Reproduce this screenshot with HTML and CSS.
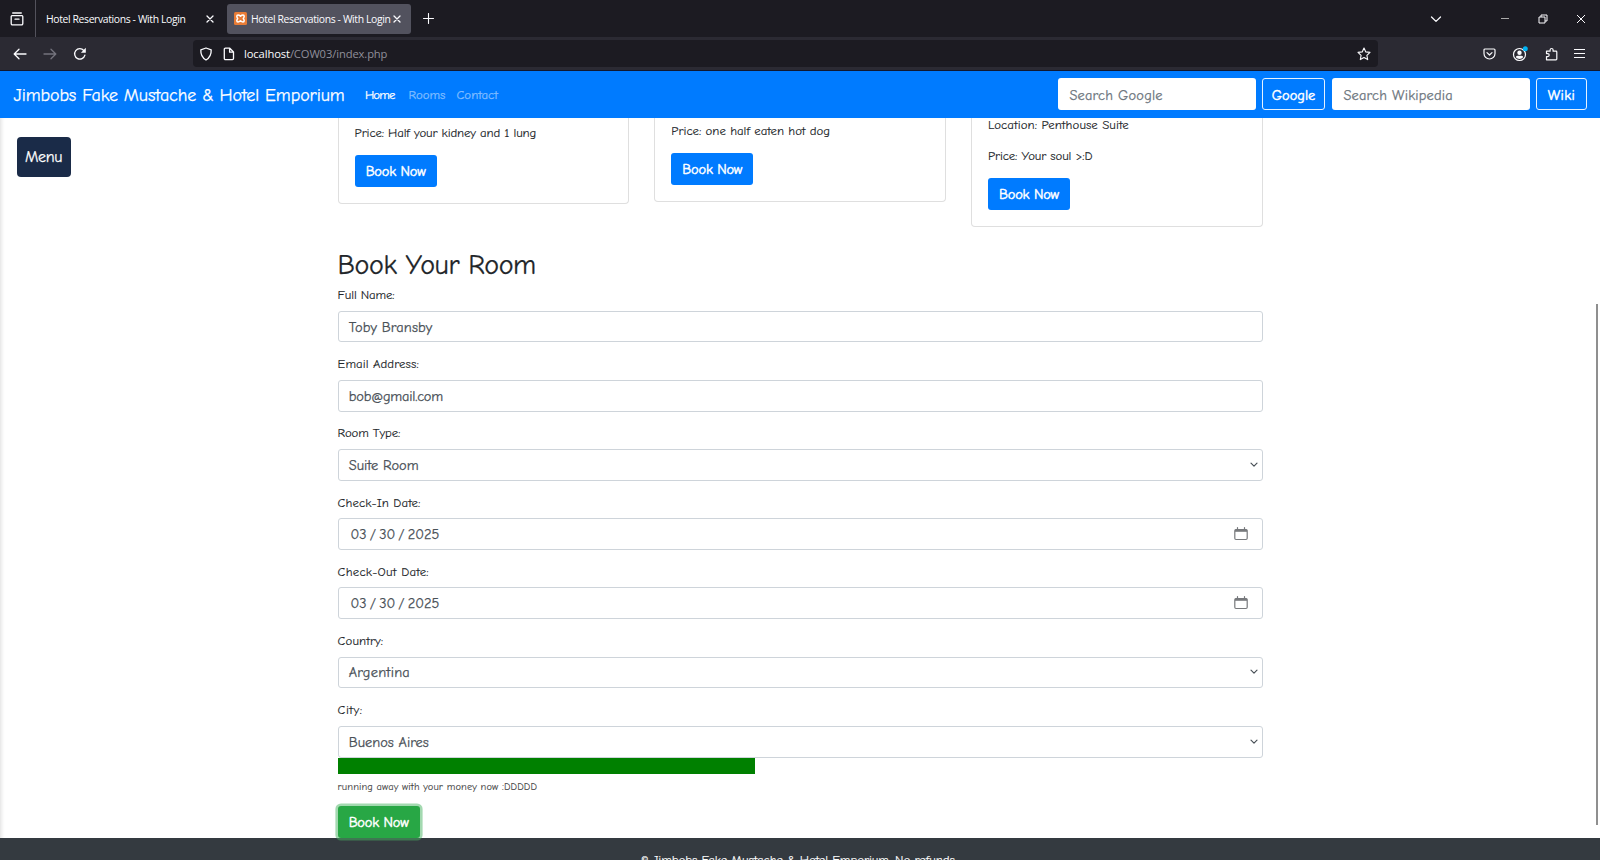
FILE: index.html
```html
<!DOCTYPE html>
<html lang="en">
<head>
<meta charset="utf-8">
<title>Hotel Reservations - With Login</title>
<link rel="stylesheet" href="styles.css">
</head>
<body>
<div class="window">
  <header class="tabbar">
    <div class="tabview">
      <svg width="14" height="14" viewBox="0 0 14 14"><path d="M2.7 1h8.6M1.8 3.6h10.4M2.2 3.6h9.6a1 1 0 0 1 1 1v7a1.2 1.2 0 0 1-1.2 1.2H2.4a1.2 1.2 0 0 1-1.2-1.2v-7a1 1 0 0 1 1-1zM5 7.2h4"/></svg>
    </div>
    <div class="tab tab-first"><span class="tab-title">Hotel Reservations - With Login</span>
      <svg class="tab-close" width="8" height="8" viewBox="0 0 8 8"><path d="M1 1l6 6M7 1L1 7"/></svg></div>
    <div class="tab tab-active">
      <svg class="favicon" width="13" height="13" viewBox="0 0 13 13"><rect class="fav-bg" width="13" height="13" rx="1.5"/><path class="fav-mark" d="M2.800 4.200Q2.800 3 4 3q1.200 0 2.500 1.200Q7.800 3 9 3q1.200 0 1.200 1.200 0 1.100-.9 2.300.9 1.200.9 2.300Q10.200 10 9 10 7.800 10 6.500 8.800 5.200 10 4 10 2.800 10 2.800 8.800q0-1.100.9-2.300-.9-1.200-.9-2.300z"/></svg>
      <span class="tab-title">Hotel Reservations - With Login</span>
      <svg class="tab-close" width="8" height="8" viewBox="0 0 8 8"><path d="M1 1l6 6M7 1L1 7"/></svg></div>
    <svg class="newtab" width="11" height="11" viewBox="0 0 11 11"><path d="M5.5 .5v10M.5 5.5h10"/></svg>
    <div class="winctl">
      <svg width="12" height="12" viewBox="0 0 12 12"><path d="M1.5 4l4.500 4.400L10.500 4"/></svg>
      <svg class="thin c-min" width="10" height="10" viewBox="0 0 10 10"><path d="M1 4.500h8"/></svg>
      <svg class="thin c-max" width="10" height="10" viewBox="0 0 10 10"><path d="M1 3h6v6H1zM3 3V1h6v6H7"/></svg>
      <svg class="thin c-close" width="10" height="10" viewBox="0 0 10 10"><path d="M1 1l8 8M9 1L1 9"/></svg>
    </div>
  </header>
  <div class="toolbar">
    <div class="history">
      <svg width="14" height="12" viewBox="0 0 14 12"><path d="M13 6H1.500M6 1.200L1.200 6 6 10.800"/></svg>
      <svg class="dim" width="14" height="12" viewBox="0 0 14 12"><path d="M1 6h11.500M8 1.200L12.800 6 8 10.800"/></svg>
      <svg width="14" height="14" viewBox="0 0 14 14"><path d="M11.900 8.200A5.200 5.200 0 1 1 10.800 3.500"/><path class="solid" d="M12.800.8v4.900H7.900z"/></svg>
    </div>
    <div class="urlbar">
      <svg width="14" height="14" viewBox="0 0 14 14"><path d="M7 1l5.200 1.800c.2 4.600-1.300 8-5.200 10.200C3.100 10.800 1.600 7.400 1.800 2.800z"/></svg>
      <svg class="page-icon" width="12" height="14" viewBox="0 0 12 14"><path d="M2.400 1.200h4.400L10.500 5v6.600a1.100 1.100 0 0 1-1.100 1.100h-7a1.100 1.100 0 0 1-1.100-1.100V2.300a1.100 1.100 0 0 1 1.100-1.100zM6.600 1.400v3.800h3.700"/></svg>
      <span class="url"><b>localhost</b>/COW03/index.php</span>
      <svg class="star" width="14" height="14" viewBox="0 0 14 14"><path d="M7 1l1.800 3.900 4.200.5-3.100 2.900.8 4.300L7 10.500l-3.700 2.100.8-4.300L1 5.400l4.200-.5z"/></svg>
    </div>
    <div class="tools">
      <svg width="13" height="12" viewBox="0 0 13 12"><path d="M2 1h9a1 1 0 0 1 1 1v3.500a5.500 5.500 0 0 1-11 0V2a1 1 0 0 1 1-1zM4 4.600L6.500 7 9 4.600"/></svg>
      <svg width="16" height="16" viewBox="0 0 16 16"><circle cx="7.500" cy="8.500" r="6"/><circle class="solid" cx="7.500" cy="6.800" r="2.200"/><path class="solid" d="M3.800 11.200q.3-1.400 2-1.400h3.400q1.700 0 2 1.400-1.500 1.800-3.700 1.800t-3.700-1.800z"/><circle class="dot" cx="13.300" cy="2.700" r="2.500"/></svg>
      <svg width="13" height="14" viewBox="0 0 13 14"><path d="M1.500 12.800V9.600h1.200a1.500 1.500 0 0 0 0-3H1.500V4.200h3.600V3a1.500 1.500 0 0 1 3 0v1.200H11a.8.800 0 0 1 .8.800v7a.8.800 0 0 1-.8.800z"/></svg>
      <svg width="11" height="11" viewBox="0 0 11 11"><path d="M.5 1.500h10M.5 5.500h10M.5 9.500h10"/></svg>
    </div>
  </div>

  <nav class="navbar">
    <a class="brand">Jimbobs Fake Mustache &amp; Hotel Emporium</a>
    <a class="link link-on">Home</a><a class="link link-rooms">Rooms</a><a class="link">Contact</a>
    <div class="searches">
      <div class="search">Search Google</div>
      <div class="outline-btn btn-google">Google</div>
      <div class="search">Search Wikipedia</div>
      <div class="outline-btn btn-wiki">Wiki</div>
    </div>
  </nav>

  <div class="viewport">
    <div class="menu">Menu</div>
    <main class="container">
      <div class="cards">
        <div class="card card-a"><p class="snug">Price: Half your kidney and 1 lung</p><div class="btn">Book Now</div></div>
        <div class="card card-b"><p>Price: one half eaten hot dog</p><div class="btn">Book Now</div></div>
        <div class="card card-c"><p class="loose">Location: Penthouse Suite</p><p class="snug">Price: Your soul &gt;:D</p><div class="btn">Book Now</div></div>
      </div>
      <h2>Book Your Room</h2>
      <div class="group"><label class="snug">Full Name:</label><div class="field"><span class="loose">Toby Bransby</span></div></div>
      <div class="group"><label class="loose">Email Address:</label><div class="field"><span class="email">bob@gmail.com</span></div></div>
      <div class="group"><label class="snug">Room Type:</label><div class="field"><span>Suite Room</span><svg class="chev" width="8" height="6" viewBox="0 0 8 6"><path d="M1 1.200l3 3 3-3"/></svg></div></div>
      <div class="group"><label class="loose">Check-In Date:</label><div class="field date"><span class="day">03 / 30 / 2025</span><svg class="cal" width="14" height="14" viewBox="0 0 14 14"><path d="M2 2.500h10a1.200 1.200 0 0 1 1.200 1.200v7.600a1.200 1.200 0 0 1-1.200 1.200H2A1.200 1.200 0 0 1 .8 11.300V3.700A1.200 1.200 0 0 1 2 2.500zM3.500 .6v2M10.500 .6v2"/><path class="cal-top" d="M1 2.500h12v2.300H1z"/></svg></div></div>
      <div class="group"><label class="looser">Check-Out Date:</label><div class="field date"><span class="day">03 / 30 / 2025</span><svg class="cal" width="14" height="14" viewBox="0 0 14 14"><path d="M2 2.500h10a1.200 1.200 0 0 1 1.200 1.200v7.600a1.200 1.200 0 0 1-1.200 1.200H2A1.200 1.200 0 0 1 .8 11.300V3.700A1.200 1.200 0 0 1 2 2.500zM3.500 .6v2M10.500 .6v2"/><path class="cal-top" d="M1 2.500h12v2.300H1z"/></svg></div></div>
      <div class="group"><label class="loose">Country:</label><div class="field"><span class="looser">Argentina</span><svg class="chev" width="8" height="6" viewBox="0 0 8 6"><path d="M1 1.200l3 3 3-3"/></svg></div></div>
      <div class="group last"><label class="city">City:</label><div class="field"><span>Buenos Aires</span><svg class="chev" width="8" height="6" viewBox="0 0 8 6"><path d="M1 1.200l3 3 3-3"/></svg></div></div>
      <div class="progress"></div>
      <div class="status">running away with your money now :DDDDD</div>
      <div class="btn btn-submit">Book Now</div>
    </main>
    <footer class="footer">© Jimbobs Fake Mustache &amp; Hotel Emporium. No refunds.</footer>
    <div class="scroll-thumb"></div>
  </div>
</div>
</body>
</html>
```

FILE: styles.css
```css
* { box-sizing: border-box; }
body { margin: 0; background: #fff; overflow: hidden; }
.window {
  width: 1600px; height: 860px; overflow: hidden;
  display: flex; flex-direction: column;
  font-family: "Comic Sans MS", "Comic Neue", "Noto Sans", sans-serif;
  font-size: 12.8px; color: #212529; white-space: nowrap;
}
svg { display: block; flex: none; fill: none; stroke: #fbfbfe; stroke-width: 1.3; stroke-linecap: round; stroke-linejoin: round; }
.solid { fill: #fbfbfe; stroke: none; }

/* browser chrome */
.tabbar { height: 37px; flex: none; background: #1c1b22; display: flex; align-items: center; font-family: "Open Sans", "Noto Sans", sans-serif; font-size: 10.4px; color: #fbfbfe; }
.tabview { width: 36px; height: 37px; border-right: 1px solid #53525c; display: flex; align-items: center; padding-left: 10px; }
.tab { height: 30px; display: flex; align-items: center; border-radius: 3px; }
.tab-first { width: 191px; padding-left: 10px; }
.tab-title { width: 140px; letter-spacing: -0.37px; }
.tab-first .tab-close { margin-left: 20px; }
.tab-active { width: 184px; background: #52525e; padding-left: 7px; }
.favicon { margin-right: 4px; }
.fav-bg { fill: #e87c36; stroke: none; }
.fav-mark { stroke: #fff; stroke-width: 1.5; }
.tab-active .tab-close { margin-left: 2px; }
.newtab { margin-left: 12px; stroke-width: 1.1; }
.winctl { margin-left: auto; display: flex; align-items: center; padding-right: 14.5px; }
.thin { stroke-width: 1; stroke-linecap: butt; }
.c-min { margin-left: 58px; stroke: #aaa; }
.c-max { margin-left: 28px; }
.c-close { margin-left: 28px; }
.toolbar { height: 34px; flex: none; background: #2b2a33; border-bottom: 1px solid #11182f; display: flex; align-items: center; }
.history { width: 193px; display: flex; align-items: center; gap: 16px; padding-left: 13px; }
.dim { stroke: #74737d; }
.urlbar { width: 1185px; height: 27px; background: #1c1b22; border-radius: 4px; display: flex; align-items: center; padding-left: 6px; font-family: "Open Sans", "Noto Sans", sans-serif; font-size: 11.2px; color: #8f8f9a; }
.page-icon { margin: 0 9px 0 10px; }
.url { letter-spacing: -0.11px; }
.url b { font-weight: 400; color: #fbfbfe; }
.star { margin: 0 7px 0 auto; stroke-width: 1.1; }
.tools { flex: 1; display: flex; align-items: center; justify-content: space-between; padding: 0 15px 0 105px; }
.tools svg { stroke-width: 1.2; }
.dot { fill: #00b3f4; stroke: none; }

/* site navigation */
.navbar, .viewport { -webkit-text-stroke: 0.25px currentColor; }
.navbar { height: 46.5px; flex: none; background: #007bff; color: #fff; display: flex; align-items: center; padding: 0 13px 0 13.5px; }
.brand { width: 351.5px; font-size: 18px; letter-spacing: -0.08px; padding-top: 2px; }
.link { font-size: 12.8px; color: #80bdff; padding-top: 1px; }
.link-on { color: #fff; width: 43.5px; letter-spacing: -0.9px; }
.link-rooms { width: 48px; }
.searches { margin-left: auto; display: flex; gap: 6.5px; font-size: 14.4px; }
.search { width: 198px; height: 32px; background: #fff; border-radius: 3px; color: #6c757d; line-height: 35px; padding-left: 12px; letter-spacing: 0.18px; }
.outline-btn { height: 32px; border: 1px solid #e6f2ff; border-radius: 3px; line-height: 33px; text-align: center; -webkit-text-stroke-width: 0.45px; }
.btn-google { width: 63px; }
.btn-wiki { width: 51px; letter-spacing: 0.4px; }

/* page body */
.viewport { flex: 1; min-height: 0; overflow: hidden; position: relative; box-shadow: inset 4px 0 4px -3px rgba(0,0,0,.14); }
.menu { position: absolute; left: 16.5px; top: 19.5px; width: 54px; height: 39.5px; border-radius: 4px; background: #1a2b48; color: #fff; font-size: 16px; line-height: 41px; text-align: center; letter-spacing: -0.4px; }
.container { width: 925px; margin-left: 337.6px; }
.cards { height: 110px; display: grid; grid-template-columns: repeat(3, 291.6px); column-gap: 25.1px; align-items: start; }
.card { border: 1px solid #dfdfdf; border-top: 0; border-radius: 0 0 4px 4px; padding: 0 16px 16px; }
.card-a { padding-top: 6px; }
.card-b { padding-top: 4px; }
.card-c { margin-top: -1.9px; }
p { margin: 0 0 12.5px; line-height: 18.8px; }
.snug { letter-spacing: -0.12px; }
.loose { letter-spacing: 0.08px; }
.looser { letter-spacing: 0.22px; }
.city { letter-spacing: 0.5px; }
.btn { width: 82px; height: 32px; border-radius: 3px; background: #007bff; color: #fff; font-size: 14.4px; line-height: 34.5px; text-align: center; letter-spacing: -0.2px; -webkit-text-stroke-width: 0.45px; }
h2 { margin: 20px 0 4.5px; font-size: 28px; font-weight: 400; line-height: 34px; letter-spacing: -0.38px; }
.group { height: 69.2px; }
.group label { display: block; line-height: 18.5px; margin-bottom: 6.2px; }
p, .group label { -webkit-text-stroke-width: 0.12px; }
.field { height: 31.7px; border: 1px solid #ced4da; border-radius: 3px; color: #495057; font-size: 14.4px; display: flex; align-items: center; justify-content: space-between; padding: 0 4px 0 10.2px; }
.field span { padding-top: 1px; }
.email { letter-spacing: -0.22px; }
.date { padding: 0 14px 0 12px; }
.day { word-spacing: -1.7px; }
.last { height: 56.4px; }
.chev { stroke: #495057; stroke-width: 1.2; }
.cal { stroke: #77797c; stroke-width: 1.2; }
.cal-top { fill: #77797c; stroke: none; }
.progress { width: 417.5px; height: 16.5px; background: green; position: relative; z-index: 1; }
.status { font-size: 10.4px; line-height: 16px; margin: 5px 0 11.2px; color: #444; letter-spacing: 0.12px; -webkit-text-stroke-width: 0.1px; }
.btn-submit { background: #28a745; position: relative; z-index: 2; box-shadow: 0 0 0 2.6px rgba(72,180,97,.5); }
.footer { height: 60px; background: #343a40; color: #fff; text-align: center; padding: 12px 2px 0 0; line-height: 19px; letter-spacing: -0.03px; -webkit-text-stroke-width: 0.12px; }
.scroll-thumb { position: absolute; left: 1596px; top: 186px; width: 2px; height: 521px; background: #8f8f8f; }
```
